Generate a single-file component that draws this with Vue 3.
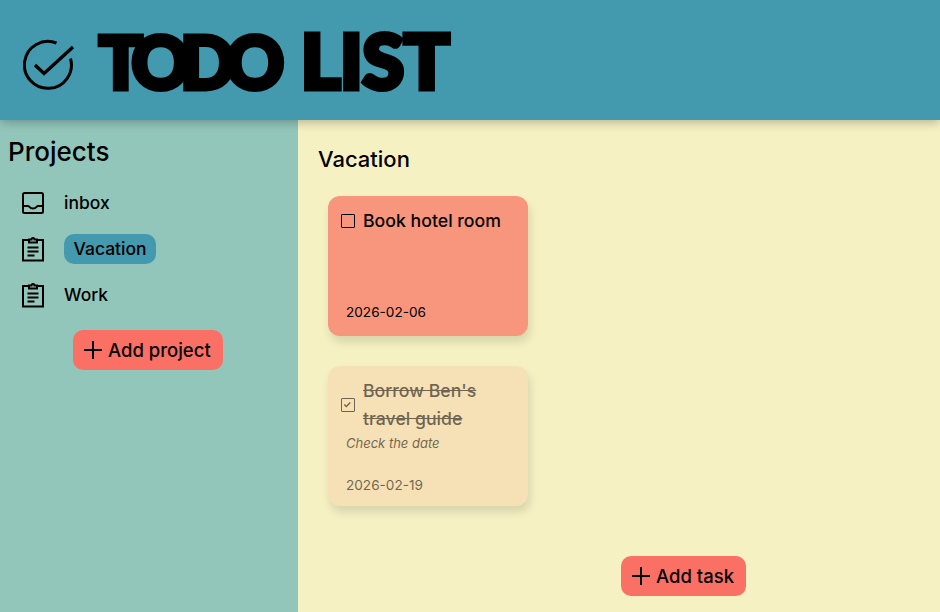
<template>
  <div class="page">
    <header class="topbar">
      <svg class="logo" viewBox="0 0 52 52" fill="none" stroke="#000" stroke-width="3">
        <path d="M33.500 4A23.500 23.500 0 1 0 47.500 19.500" />
        <path d="M12 26l9 8.500L50 8" stroke-width="3.400" />
      </svg>
      <h1 class="title"><span class="word-todo">TODO</span> <span class="word-list">LIST</span></h1>
    </header>
    <div class="body">
      <aside class="sidebar">
        <h2 class="side-title">Projects</h2>
        <ul class="projects">
          <li v-for="p in projects" :key="p.name" class="project">
            <svg v-if="p.icon === 'inbox'" class="project-icon" viewBox="0 0 24 26" fill="none" stroke="#000" stroke-width="2">
              <rect x="2" y="3" width="20" height="20" rx="1.500" />
              <path d="M2 16h5c1.500 0 1.500 2.500 5 2.500s3.500-2.500 5-2.500h5" />
            </svg>
            <svg v-else class="project-icon" viewBox="0 0 24 26" fill="none" stroke="#000" stroke-width="2">
              <path d="M8 4H2v20.500h20V4H16" />
              <path d="M8 6.500V3.500h2.500a1.500 1.500 0 0 1 3 0H16v3z" />
              <path d="M6.500 11.500h11M6.500 15.500h11M6.500 19.500h7" />
            </svg>
            <span class="project-name" :class="{ active: p.name === 'Vacation' }">{{ p.name }}</span>
          </li>
        </ul>
        <button class="add-btn add-project">
          <svg class="plus" viewBox="0 0 18 18" stroke="#000" stroke-width="2"><path d="M9 0v18M0 9h18" /></svg>
          Add project
        </button>
      </aside>
      <main class="content">
        <h2 class="list-title">Vacation</h2>
        <div class="tasks">
          <article v-for="t in tasks" :key="t.title" class="task" :class="{ done: t.done }">
            <div class="task-head">
              <span class="check">
                <svg v-if="t.done" viewBox="0 0 14 14" fill="none" stroke="#000" stroke-width="1.800"><path d="M3 7l2.500 2.500L10.500 4.500" /></svg>
              </span>
              <span class="task-title">{{ t.title }}</span>
            </div>
            <p v-if="t.note" class="task-note">{{ t.note }}</p>
            <p class="task-date">{{ t.date }}</p>
          </article>
        </div>
        <div class="footer-row">
          <button class="add-btn add-task">
            <svg class="plus" viewBox="0 0 18 18" stroke="#000" stroke-width="2"><path d="M9 0v18M0 9h18" /></svg>
            Add task
          </button>
        </div>
      </main>
    </div>
  </div>
</template>

<script setup>
const projects = [
  { name: 'inbox', icon: 'inbox' },
  { name: 'Vacation', icon: 'clipboard' },
  { name: 'Work', icon: 'clipboard' },
];

const tasks = [
  { title: 'Book hotel room', date: '2026-02-06', done: false },
  { title: "Borrow Ben's travel guide", note: 'Check the date', date: '2026-02-19', done: true },
];
</script>

<style>
body {
  margin: 0;
}
</style>

<style scoped>
.page {
  width: 940px;
  height: 612px;
  display: flex;
  flex-direction: column;
  overflow: hidden;
  font-family: Inter, "Liberation Sans", sans-serif;
  color: #000;
}

.topbar {
  height: 120px;
  flex: none;
  display: flex;
  align-items: center;
  gap: 24px;
  padding-left: 23px;
  box-sizing: border-box;
  background: #4399ae;
  box-shadow: 0 2px 10px rgba(0, 0, 0, 0.28);
  position: relative;
  z-index: 2;
}

.logo {
  width: 52px;
  height: 52px;
  flex: none;
  margin-top: 10px;
}

.title {
  margin: 0;
  font-family: Lato, "DejaVu Sans", sans-serif;
  font-size: 76px;
  font-weight: 900;
  line-height: 1;
  -webkit-text-stroke: 5px #000;
  white-space: nowrap;
}

.word-todo {
  font-size: 72px;
  letter-spacing: -9.500px;
}

.word-list {
  letter-spacing: -0.500px;
  margin-left: 8px;
}

.body {
  flex: 1;
  display: flex;
  min-height: 0;
}

.sidebar {
  width: 298px;
  flex: none;
  background: #93c6bb;
  display: flex;
  flex-direction: column;
  padding: 16px 0 0 8px;
  box-sizing: border-box;
}

.side-title {
  margin: 0;
  font-size: 26px;
  font-weight: 500;
  line-height: 32px;
}

.projects {
  list-style: none;
  margin: 20px 0 0;
  padding: 0 0 0 13px;
  display: flex;
  flex-direction: column;
  gap: 16px;
}

.project {
  height: 30px;
  display: flex;
  align-items: center;
  gap: 19px;
  font-size: 17.500px;
  font-weight: 500;
}

.project-icon {
  width: 24px;
  height: 26px;
  flex: none;
}

.project-name {
  line-height: 30px;
}

.project-name.active {
  background: #4399ae;
  border-radius: 10px;
  padding: 0 9.500px;
}

.add-btn {
  display: inline-flex;
  align-items: center;
  gap: 6px;
  height: 40px;
  border: none;
  border-radius: 10px;
  background: #fb7064;
  color: #000;
  font-family: inherit;
  font-size: 18.500px;
  font-weight: 500;
  padding: 0 12px 0 11px;
  box-sizing: border-box;
}

.plus {
  width: 18px;
  height: 18px;
  flex: none;
}

.add-project {
  align-self: flex-start;
  margin: 20px 0 0 65px;
}

.content {
  flex: 1;
  background: #f5f1c3;
  padding: 24px 0 0 20px;
  box-sizing: border-box;
  display: flex;
  flex-direction: column;
}

.list-title {
  margin: 0;
  font-size: 22px;
  font-weight: 500;
  line-height: 31px;
}

.tasks {
  display: flex;
  flex-direction: column;
  gap: 30px;
  margin: 21px 0 0 10px;
}

.task {
  width: 200px;
  height: 140px;
  box-sizing: border-box;
  background: #f8957d;
  border-radius: 12px;
  box-shadow: 2px 6px 10px rgba(0, 0, 0, 0.12);
  padding: 11px 12px 0 13px;
  display: flex;
  flex-direction: column;
}

.task-head {
  display: flex;
  align-items: center;
  gap: 8px;
}

.check {
  width: 14px;
  height: 14px;
  box-sizing: border-box;
  border: 1.500px solid #000;
  border-radius: 1px;
  flex: none;
}

.check svg {
  display: block;
  width: 11px;
  height: 11px;
}

.task-title {
  font-size: 17.700px;
  font-weight: 500;
  line-height: 28px;
}

.task-note {
  margin: 2px 0 0 5px;
  font-size: 13px;
  font-style: italic;
  line-height: 16px;
}

.task-date {
  margin: auto 0 15px 5px;
  font-size: 13.600px;
  line-height: 18px;
}

.task.done {
  background: #f6e0b5;
}

.task.done > * {
  opacity: 0.55;
}

.task.done .task-title {
  text-decoration: line-through;
}

.task.done .task-date {
  margin-bottom: 12px;
}

.footer-row {
  margin-top: 50px;
  padding-left: 303px;
}
</style>
